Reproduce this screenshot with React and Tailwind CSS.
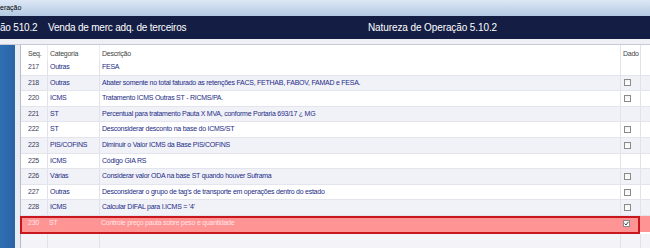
import React from "react";

const rows = [
  { seq: "217", cat: "Outras", desc: "FESA", box: false },
  { seq: "218", cat: "Outras", desc: "Abater somente no total faturado as retenções FACS, FETHAB, FABOV, FAMAD e FESA.", box: true },
  { seq: "220", cat: "ICMS", desc: "Tratamento ICMS Outras ST - RICMS/PA.", box: true },
  { seq: "221", cat: "ST", desc: "Percentual para tratamento Pauta X MVA, conforme Portaria 693/17 ¿ MG", box: false },
  { seq: "222", cat: "ST", desc: "Desconsiderar desconto na base do ICMS/ST", box: true },
  { seq: "223", cat: "PIS/COFINS", desc: "Diminuir o Valor ICMS  da Base PIS/COFINS", box: true },
  { seq: "225", cat: "ICMS", desc: "Código GIA RS", box: false },
  { seq: "226", cat: "Várias", desc: "Considerar valor ODA na base ST quando houver Suframa", box: true },
  { seq: "227", cat: "Outras", desc: "Desconsiderar o grupo de tag's de transporte em operações dentro do estado", box: true },
  { seq: "228", cat: "ICMS", desc: "Calcular DIFAL para I.ICMS = '4'", box: true },
];

function Box({ checked }) {
  return (
    <div className="w-[7px] h-[7px] border border-[#8a8a8a] bg-gradient-to-b from-[#f4f4f4] to-white flex items-center justify-center">
      {checked && (
        <svg width="5" height="5" viewBox="0 0 5 5">
          <path d="M0.5 2.5 L2 4 L4.5 0.8" stroke="#444" strokeWidth="1" fill="none" />
        </svg>
      )}
    </div>
  );
}

function Row({ r, i }) {
  const bg = i % 2 === 1 ? "bg-[#f1f1f8]" : "bg-white";
  return (
    <div className={`flex h-[15.6px] border-b border-[#e4e4ec] ${bg} text-[#232c86]`}>
      <div className="w-[26px] pl-[7px] flex items-center text-[#3a3f60]">{r.seq}</div>
      <div className="w-[52px] pl-[2px] border-l border-[#e2e2ea] flex items-center">{r.cat}</div>
      <div className="w-[521px] pl-[2px] border-l border-[#e2e2ea] flex items-center whitespace-nowrap">{r.desc}</div>
      <div className="w-[20px] pl-[3px] border-l border-[#e2e2ea] flex items-center">{r.box && <Box />}</div>
      <div className="flex-1 border-l border-[#e2e2ea]"></div>
    </div>
  );
}

export default function App() {
  return (
    <div className="w-[650px] h-[248px] overflow-hidden bg-white flex flex-col" style={{ fontFamily: '"Liberation Sans", Arial, sans-serif' }}>
      <div className="h-[16px] shrink-0 bg-gradient-to-b from-[#dde8f5] to-[#b3c9e3] text-[7px] text-black flex items-center">
        eração
      </div>
      <div className="h-[23px] shrink-0 bg-[#141e44] text-white text-[10px] tracking-[-0.2px] flex items-center">
        <div className="w-[368px] flex">
          <span className="w-[48px]">ão 510.2</span>
          <span>Venda de merc adq. de terceiros</span>
        </div>
        <span className="tracking-[-0.1px]">Natureza de Operação 5.10.2</span>
      </div>
      <div className="h-[6px] shrink-0 bg-[#eef0f6] border-b border-[#c5cad6]"></div>
      <div className="flex flex-1 min-h-0">
        <div className="w-[15px] bg-gradient-to-r from-[#2f6fb4] to-[#2a64a6]"></div>
        <div className="w-[5px] bg-[#e9edf3]"></div>
        <div className="flex-1 border-l border-[#b8bcc8] bg-white text-[7px] tracking-[-0.25px] flex flex-col">
          <div className="flex h-[15px] shrink-0 text-[#444] bg-white">
            <div className="w-[26px] pl-[7px] flex items-end pb-[1px]">Seq.</div>
            <div className="w-[52px] pl-[2px] border-l border-[#ececf2] flex items-end pb-[1px]">Categoria</div>
            <div className="w-[521px] pl-[2px] border-l border-[#ececf2] flex items-end pb-[1px]">Descrição</div>
            <div className="w-[20px] pl-[2px] border-l border-[#e2e2ea] flex items-end pb-[1px]">Dado</div>
            <div className="flex-1 border-l border-[#e2e2ea]"></div>
          </div>
          {rows.map((r, i) => (
            <Row key={r.seq} r={r} i={i} />
          ))}
          <div className="relative flex h-[15.6px] shrink-0 bg-[#ff9494] text-[#ffe4e4]">
            <div className="w-[26px] pl-[7px] flex items-center">230</div>
            <div className="w-[52px] pl-[2px] flex items-center">ST</div>
            <div className="w-[521px] pl-[2px] flex items-center whitespace-nowrap">Controle preço pauta sobre peso e quantidade</div>
            <div className="w-[20px] pl-[3px] flex items-center"><Box checked /></div>
            <div className="flex-1"></div>
            <div className="absolute left-[-1px] top-0 right-[10px] bottom-[-2px] border-2 border-[#c8161d]"></div>
          </div>
          <div className="flex flex-1 bg-[#f3f3f8] mt-[2px]">
            <div className="w-[26px]"></div>
            <div className="w-[52px] border-l border-[#e2e2ea]"></div>
            <div className="w-[521px] border-l border-[#e2e2ea]"></div>
            <div className="w-[20px] border-l border-[#e2e2ea]"></div>
            <div className="flex-1 border-l border-[#e2e2ea]"></div>
          </div>
        </div>
      </div>
    </div>
  );
}
